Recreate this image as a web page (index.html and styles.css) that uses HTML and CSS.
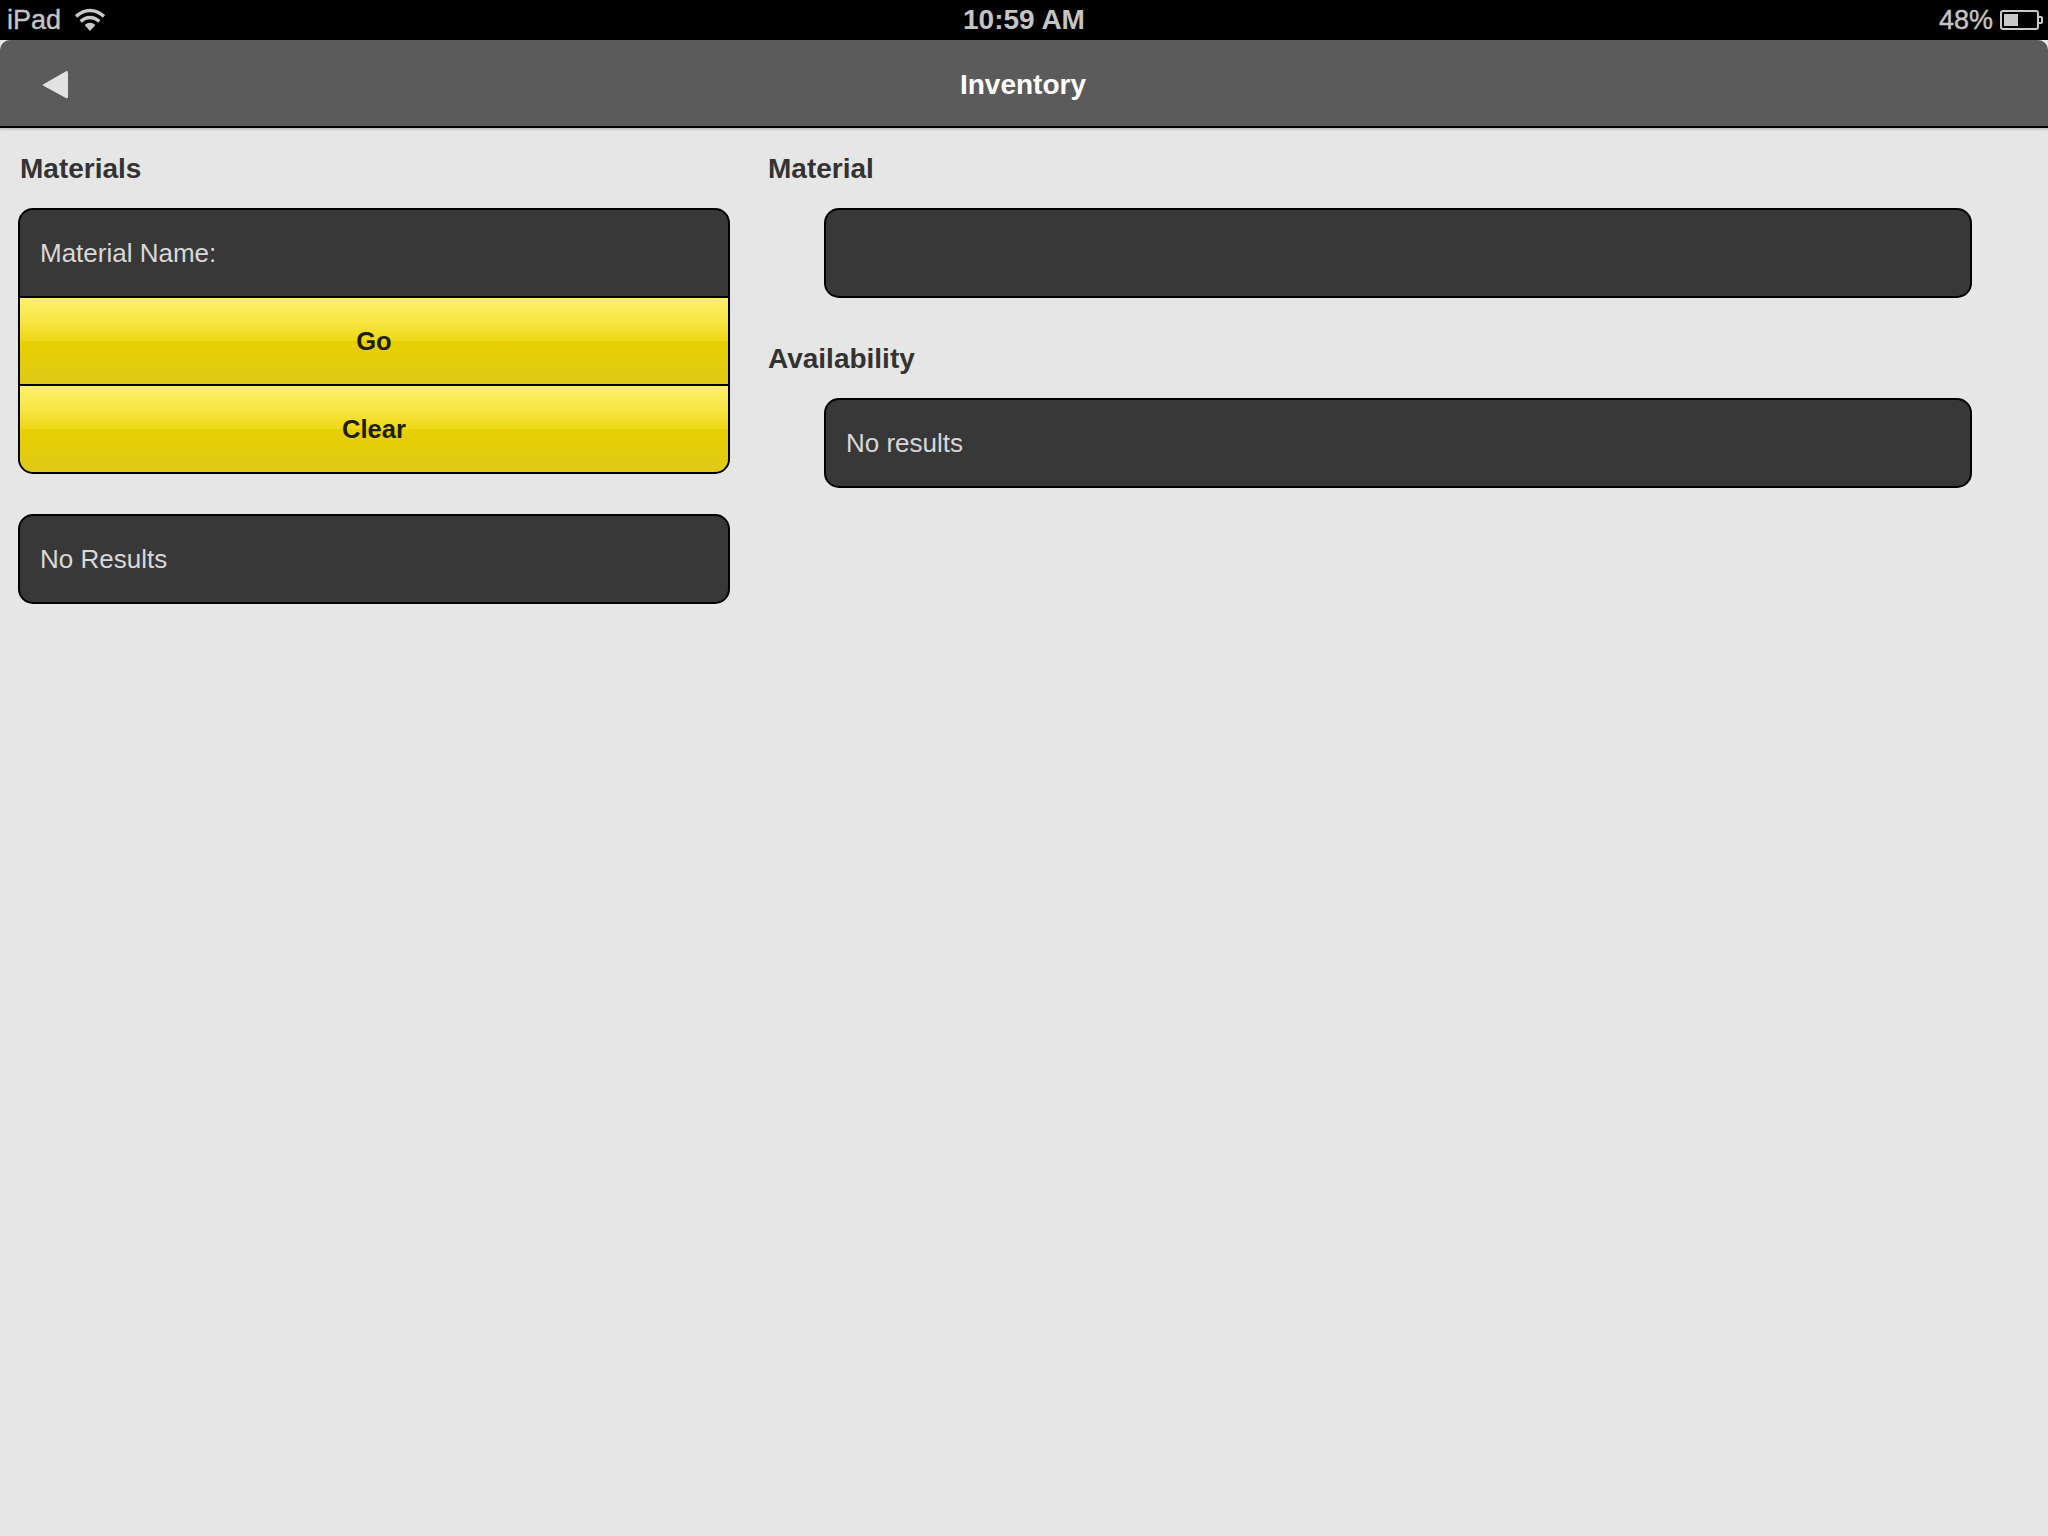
FILE: index.html
```html
<!DOCTYPE html>
<html lang="en">
<head>
    <meta charset="UTF-8">
    <meta name="viewport" content="width=device-width, initial-scale=1.0">
    <title>Inventory</title>
    <link rel="stylesheet" href="styles.css">
</head>
<body>

    <!-- Status Bar -->
    <div class="status-bar">
        <div class="status-left">
            <span>iPad</span>
            <svg class="wifi-icon" width="32" height="24" viewBox="0 0 32 24">
                <path d="M16 24 L10.6 18 Q16 13.6 21.4 18 Z" fill="#c8c8c8"/>
                <path d="M6.6 14.4 Q16 6.6 25.4 14.4" fill="none" stroke="#c8c8c8" stroke-width="3.4"/>
                <path d="M2 9.4 Q16 -2.4 30 9.4" fill="none" stroke="#c8c8c8" stroke-width="3.4"/>
            </svg>
        </div>
        <div class="status-time">10:59 AM</div>
        <div class="status-right">
            <span>48%</span>
            <svg class="battery-icon" width="43" height="21" viewBox="0 0 43 21">
                <rect x="1" y="1" width="37" height="18" rx="2" fill="none" stroke="#c8c8c8" stroke-width="2"/>
                <rect x="4" y="4" width="14" height="12" fill="#c8c8c8"/>
                <path d="M39 6 H41 Q43 6 43 8 V12 Q43 14 41 14 H39 V12 H41 V8 H39 Z" fill="#c8c8c8"/>
            </svg>
        </div>
    </div>

    <!-- Navbar -->
    <header>
        <svg class="back-btn" width="27" height="30" viewBox="0 0 27 30">
            <path d="M24.5 1.5 Q25.5 1 25.5 2.5 V27 Q25.5 28.5 24 27.6 L1 15 Z" fill="#e2e2e2" stroke="#e2e2e2" stroke-linejoin="round"/>
        </svg>
        <h1>Inventory</h1>
    </header>

    <!-- Main Content -->
    <div class="main-content">

        <div class="left-col">
            <h2>Materials</h2>
            <div class="panel">
                <div class="panel-row">Material Name:</div>
                <a class="yellow-btn" href="#go">Go</a>
                <a class="yellow-btn" href="#clear">Clear</a>
            </div>
            <div class="panel results">
                <div class="panel-row">No Results</div>
            </div>
        </div>

        <div class="right-col">
            <h2>Material</h2>
            <div class="panel inset">
                <div class="panel-row"></div>
            </div>
            <h2 class="second">Availability</h2>
            <div class="panel inset">
                <div class="panel-row">No results</div>
            </div>
        </div>

    </div>

</body>
</html>
```

FILE: styles.css
```css
/* Reset and Basic Styles */
* {
    margin: 0;
    padding: 0;
    box-sizing: border-box;
}
body {
    font-family: "Liberation Sans", Arial, sans-serif;
    background-color: #e6e6e6;
    color: #333;
    height: 1536px;
    overflow: hidden;
}

/* Status Bar */
.status-bar {
    height: 40px;
    background-color: #000;
    color: #c4c4c4;
    font-size: 27px;
    -webkit-text-stroke: 0.4px #c4c4c4;
    display: grid;
    grid-template-columns: 1fr auto 1fr;
    align-items: center;
}
.status-left {
    display: flex;
    align-items: center;
    gap: 13px;
    padding-left: 7px;
}
.wifi-icon {
    margin-top: -2px;
}
.status-time {
    font-size: 28px;
    font-weight: bold;
    -webkit-text-stroke: 0;
}
.status-right {
    display: flex;
    justify-content: flex-end;
    align-items: center;
    gap: 7px;
    padding-right: 5px;
}

/* Navbar */
header {
    height: 88px;
    padding: 3px 2px 0 0;
    background-color: #5b5b5b;
    border-bottom: 2px solid #000;
    border-radius: 10px 10px 0 0;
    box-shadow: 0 2px 2px rgba(0, 0, 0, 0.15);
    display: flex;
    justify-content: center;
    align-items: center;
    position: relative;
}
header h1 {
    font-size: 28px;
    color: #fff;
}
.back-btn {
    position: absolute;
    left: 42px;
    top: 30px;
}

/* Main Content */
.main-content {
    display: flex;
    padding: 0 18px;
}
.left-col {
    width: 712px;
    padding-top: 23px;
}
.right-col {
    width: 1154px;
    margin-left: 38px;
    padding-top: 23px;
}
h2 {
    font-size: 28px;
    line-height: 36px;
    color: #333;
    margin: 0 0 21px 2px;
}
.right-col h2 {
    margin-left: 0;
}
.right-col .second {
    margin-top: 43px;
}

/* Panels */
.panel {
    background-color: #383838;
    border: 2px solid #000;
    border-radius: 15px;
    overflow: hidden;
}
.panel.results {
    margin-top: 40px;
}
.panel.inset {
    margin-left: 56px;
    width: 1148px;
}
.panel-row {
    height: 86px;
    padding-left: 20px;
    display: flex;
    align-items: center;
    font-size: 26px;
    color: #d8d8d8;
}

/* Yellow Buttons */
.yellow-btn {
    display: flex;
    justify-content: center;
    align-items: center;
    height: 88px;
    border-top: 2px solid #000;
    font-size: 25.5px;
    font-weight: bold;
    color: #1e1e0a;
    text-decoration: none;
    background: linear-gradient(to bottom, #fdef6c 0%, #f8e84c 22%, #eed816 50%, #e7d000 50%, #dfc918 100%);
}
```
